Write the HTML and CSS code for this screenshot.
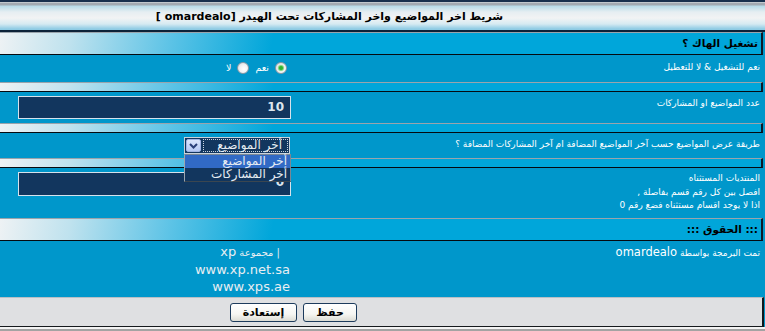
FILE: index.html
```html
<!DOCTYPE html>
<html lang="ar" dir="rtl">
<head>
<meta charset="utf-8">
<title>omardealo</title>
<link rel="stylesheet" href="styles.css">
</head>
<body>
<div class="page">
  <div class="title"><span>شريط اخر المواضيع واخر المشاركات تحت الهيدر [omardealo ]</span></div>

  <div class="sec">تشغيل الهاك ؟</div>

  <div class="row r1">
    <div class="label">نعم للتشغيل &amp; لا للتعطيل</div>
    <div class="ctrl radios">
      <span class="radio on"></span><span class="rlab">نعم</span>
      <span class="radio"></span><span class="rlab">لا</span>
    </div>
  </div>
  <div class="spacer"></div>

  <div class="row r2">
    <div class="label">عدد المواضيع او المشاركات</div>
    <div class="ctrl"><div class="input">10</div></div>
  </div>
  <div class="spacer"></div>

  <div class="row r3">
    <div class="label">طريقة عرض المواضيع حسب آخر المواضيع المضافة ام آخر المشاركات المضافة ؟</div>
    <div class="ctrl sel-cell">
      <div class="select">
        <span class="sel-text">أخر المواضيع</span>
        <span class="sel-btn"><svg width="9" height="6" viewBox="0 0 9 6"><path d="M1 1 L4.5 4.5 L8 1" fill="none" stroke="#2a3f78" stroke-width="2"/></svg></span>
      </div>
      <div class="dropdown">
        <div class="opt active">أخر المواضيع</div>
        <div class="opt">أخر المشاركات</div>
      </div>
    </div>
  </div>
  <div class="spacer"></div>

  <div class="row r4">
    <div class="label lines">
      <div>المنتديات المستثناه</div>
      <div>افصل بين كل رقم قسم بفاصلة ,</div>
      <div>اذا لا يوجد اقسام مستثناه فضع رقم 0</div>
    </div>
    <div class="ctrl"><div class="input tall">0</div></div>
  </div>

  <div class="sec">::: الحقوق :::</div>

  <div class="row r5">
    <div class="label">تمت البرمجة بواسطة <span class="lat sm">omardealo</span></div>
    <div class="ctrl credits">
      <div class="first">| مجموعة <span class="lat">xp</span></div>
      <div class="lat">www.xp.net.sa</div>
      <div class="lat">www.xps.ae</div>
    </div>
  </div>

  <div class="footer">
    <button class="btn save">حفظ</button>
    <button class="btn reset">إستعادة</button>
  </div>
  <div class="after"></div>
</div>
</body>
</html>
```

FILE: styles.css
```css
* { box-sizing: border-box; }
html, body { margin: 0; padding: 0; }
body {
  width: 765px;
  height: 331px;
  overflow: hidden;
  background: #a3a3a3;
  font-family: "DejaVu Sans", sans-serif;
  font-size: 9px;
}
.page {
  width: 765px;
  background: #0097cb;
}
.title {
  height: 32px;
  border-top: 2px solid #17304e;
  border-bottom: 2px solid #0c2238;
  background: linear-gradient(to bottom, #dfe6ea 0, #a2aab2 1px, #a2aab2 3px, #b6dbe9 4px, #e6eef2 10px, #f2f3f4 16px, #d6eaf2 22px, #8ecbe4 27px, #8ecbe4 28px);
  display: flex;
  align-items: center;
  justify-content: center;
  padding-right: 106px;
  font-weight: bold;
  font-size: 11px;
  color: #000;
}
.sec, .spacer {
  border-top: 1px solid #9aa4ac;
  border-bottom: 1px solid #050a10;
  border-right: 2px solid #0b1a28;
  margin-right: 2px;
  background: linear-gradient(100deg, #eef2f4 0, #bfe2ee 70px, #5cc3e6 170px, #00a6da 270px, #00a6da 100%);
}
.sec {
  height: 23px;
  line-height: 21px;
  padding-right: 3px;
  font-weight: bold;
  font-size: 10.5px;
  color: #000;
}
.spacer { height: 10px; }
.row {
  display: grid;
  grid-template-columns: 1fr 296px;
  color: #fff;
  background: #0097cb;
}
.label {
  padding: 4px 5px 0 0;
  line-height: 14px;
  font-size: 9px;
}
.ctrl {
  padding: 4px 5px 0 0;
  position: relative;
}
.r1 { height: 27px; }
.r2 { height: 31px; }
.r3 { height: 25px; }
.r4 { height: 50px; }
.r5 { height: 56px; }
.r1 .label { padding-top: 5px; }

.radios {
  display: flex;
  align-items: center;
  padding: 7px 9px 0 0;
  height: 19px;
}
.radio {
  width: 12px;
  height: 12px;
  border-radius: 50%;
  border: 1px solid #8d9aa6;
  background: radial-gradient(circle at 60% 60%, #ffffff 0, #f2f3f4 45%, #cfd5da 100%);
  display: inline-flex;
  align-items: center;
  justify-content: center;
}
.radio.on::after {
  content: "";
  width: 4px;
  height: 4px;
  border-radius: 50%;
  background: #2fb42f;
  box-shadow: 0 0 1px 1px #6fd36f;
}
.rlab { margin: 0 6px 0 6px; line-height: 12px; font-size: 9.5px; }

.input {
  width: 273px;
  height: 23px;
  background: #12365e;
  border: 1px solid #d6e2ec;
  color: #dde6ee;
  font-weight: bold;
  font-size: 12px;
  line-height: 21px;
  padding-right: 6px;
}
.input.tall { height: 24px; line-height: 18px; }

.sel-cell { padding-right: 6px; }
.select {
  width: 106px;
  height: 17px;
  background: #12365e;
  border: 1px solid #c9d3dc;
  display: flex;
  align-items: center;
  justify-content: space-between;
  padding: 1px;
}
.sel-text {
  flex: 1;
  height: 13px;
  border: 1px dotted #c8d4e0;
  color: #e6edf3;
  font-size: 12px;
  line-height: 11px;
  padding-right: 5px;
  margin-left: 2px;
}
.sel-btn {
  width: 15px;
  height: 13px;
  background: linear-gradient(#dbe5fb, #b4c8f4);
  border: 1px solid #9fb4e4;
  border-radius: 2px;
  display: flex;
  align-items: center;
  justify-content: center;
}
.dropdown {
  position: absolute;
  top: 21px;
  right: 5px;
  width: 107px;
  height: 28px;
  background: #12365e;
  border: 1px solid #7a8794;
  border-bottom-color: #3b4650;
  border-left-color: #9aa6b0;
  z-index: 2;
}
.opt {
  height: 13px;
  color: #e6edf3;
  font-size: 12px;
  line-height: 13px;
  padding-right: 3px;
}
.opt.active { background: #316ac5; }

.lines { padding-top: 2px; }
.lines div { line-height: 13px; }
.lines div:first-child { line-height: 16px; }

.lat { font-size: 13px; }
.lat.sm { font-size: 11.5px; }
.credits {
  padding: 2px 6px 0 0;
  line-height: 17px;
  color: #e8eef2;
  font-size: 10px;
}
.credits .first { margin-right: 10px; }
.r5 .label { padding-top: 3px; line-height: 17px; }

.footer {
  height: 30px;
  border-top: 1px solid #b7c0c6;
  border-bottom: 1px solid #15191d;
  border-right: 2px solid #10161c;
  margin-right: 1px;
  background: #dfe0e2;
  display: flex;
  gap: 6px;
  padding: 5px 405px 0 0;
}
.btn {
  height: 19px;
  padding: 0;
  border: 1px solid #1d3b5c;
  border-radius: 3px;
  background: linear-gradient(#ffffff 0, #f6f6f2 60%, #dcdcd4 100%);
  font-family: "DejaVu Sans", sans-serif;
  font-size: 11px;
  font-weight: bold;
  color: #000;
}
.save { width: 54px; }
.reset { width: 67px; }
.after {
  height: 2px;
  background: #f4f4f4;
}
```
